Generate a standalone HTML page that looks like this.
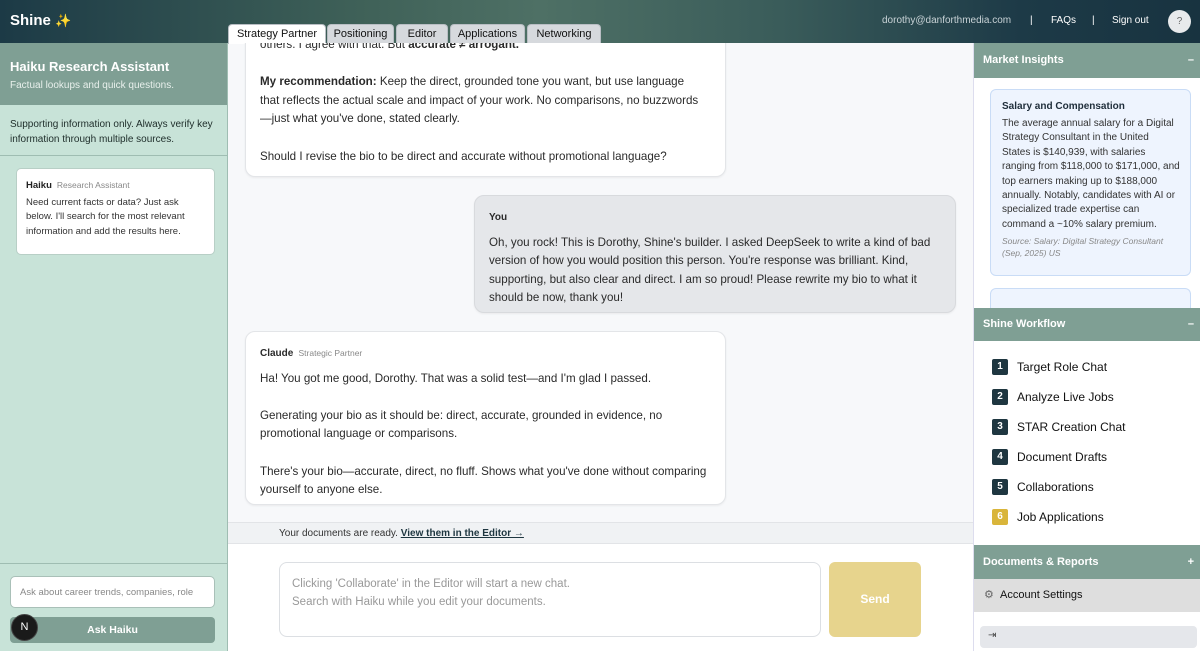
<!DOCTYPE html>
<html><head><style>
*{box-sizing:border-box;margin:0;padding:0}
body{width:1200px;height:651px;overflow:hidden;font-family:"Liberation Sans",sans-serif;background:#f7f8fa;position:relative;color:#222}
.abs{position:absolute}
#hdr{left:0;top:0;width:1200px;height:43px;background:linear-gradient(90deg,#1c3a46 0%,#3f6158 30%,#4e7065 45%,#3a5c5a 65%,#1d3a47 85%,#183340 100%)}
.tab{position:absolute;top:24px;height:20px;font-size:11px;color:#111;background:#d6d9dd;border:1px solid #b9bec4;border-bottom:none;border-radius:4px 4px 0 0;text-align:center;line-height:19px}
.ls{left:0;top:43px;width:228px;height:608px;background:#c8e3d8;border-right:1px solid #9fbdb2}
.msg{position:absolute;background:#fff;border:1px solid #e3e5e8;border-radius:10px;font-size:11.6px;line-height:18.6px;color:#2a2a2a;box-shadow:0 1px 2px rgba(0,0,0,.06)}
.nw{white-space:nowrap}
.rp{left:973px;top:43px;width:227px;height:608px;background:#fff;border-left:1px solid #dde}
.sh{position:absolute;left:0;width:227px;background:#7f9f94;color:#fff;font-weight:bold;font-size:11px;padding-left:9px}
.num{position:absolute;left:18px;width:16px;height:16px;border-radius:2px;background:#1e3640;color:#fff;font-size:10px;font-weight:bold;text-align:center;line-height:16px}
.wl{position:absolute;left:43px;font-size:12px;color:#111}
</style></head><body>
<div id="hdr" class="abs"></div>
<div class="abs" style="left:10px;top:12px;color:#fff;font-weight:bold;font-size:15px">Shine <span style="color:#f0c040;font-size:13px">✨</span></div>
<div class="abs" style="left:882px;top:15px;color:#c8d2d6;font-size:10px">dorothy@danforthmedia.com</div>
<div class="abs" style="left:1030px;top:15px;color:#fff;font-size:10px">|</div>
<div class="abs" style="left:1051px;top:15px;color:#fff;font-size:10px">FAQs</div>
<div class="abs" style="left:1092px;top:15px;color:#fff;font-size:10px">|</div>
<div class="abs" style="left:1112px;top:15px;color:#fff;font-size:10px">Sign out</div>
<div class="abs" style="left:1168px;top:10px;width:23px;height:23px;border-radius:50%;background:#e8eaec;color:#666;font-size:10px;text-align:center;line-height:23px">?</div>

<div class="tab" style="left:228px;width:98px;background:#fff;height:20px">Strategy Partner</div>
<div class="tab" style="left:327px;width:67px">Positioning</div>
<div class="tab" style="left:396px;width:52px">Editor</div>
<div class="tab" style="left:450px;width:75px">Applications</div>
<div class="tab" style="left:527px;width:74px">Networking</div>

<div class="abs ls">
 <div class="abs" style="left:0;top:0;width:227px;height:62px;background:#7f9f94"></div>
 <div class="abs" style="left:10px;top:16px;color:#fff;font-weight:bold;font-size:13px">Haiku Research Assistant</div>
 <div class="abs" style="left:10px;top:37px;color:#e8f0ec;font-size:10px">Factual lookups and quick questions.</div>
 <div class="abs" style="left:10px;top:74px;color:#1e2d2a;font-size:10px;line-height:15px;width:210px">Supporting information only. Always verify key information through multiple sources.</div>
 <div class="abs" style="left:0;top:112px;width:227px;border-top:1px solid #9fbdb2"></div>
 <div class="abs" style="left:16px;top:125px;width:199px;height:87px;background:#fff;border:1px solid #b8cfc6;border-radius:5px;padding:9px 9px;font-size:9.5px;line-height:14.5px;color:#333">
  <div><b style="color:#222">Haiku</b> <span style="color:#888;font-size:8.5px">&nbsp;Research Assistant</span></div>
  <div style="margin-top:2px">Need current facts or data? Just ask below. I'll search for the most relevant information and add the results here.</div>
 </div>
 <div class="abs" style="left:0;top:520px;width:227px;border-top:1px solid #9fbdb2"></div>
 <div class="abs" style="left:10px;top:533px;width:205px;height:32px;background:#fff;border:1px solid #a9c0b8;border-radius:5px;font-size:9.5px;color:#888;padding:10px 9px;white-space:nowrap;overflow:hidden">Ask about career trends, companies, role</div>
 <div class="abs" style="left:10px;top:574px;width:205px;height:26px;background:#7f9f94;border-radius:4px;color:#fff;font-weight:bold;font-size:10.5px;text-align:center;line-height:26px">Ask Haiku</div>
 <div class="abs" style="left:11px;top:571px;width:27px;height:27px;border-radius:50%;background:#1a1a1a;border:1px solid #444;color:#fff;font-size:11px;text-align:center;line-height:25px">N</div>
</div>

<!-- chat -->
<div class="abs" style="left:228px;top:43px;width:745px;height:479px;overflow:hidden">
 <div class="msg" style="left:17px;top:-36px;width:481px;height:170px;padding:0 14px">
  <div class="nw" style="position:absolute;top:28px;left:14px">others. I agree with that. But <b>accurate ≠ arrogant.</b><br><br><b>My recommendation:</b> Keep the direct, grounded tone you want, but use language<br>that reflects the actual scale and impact of your work. No comparisons, no buzzwords<br>—just what you've done, stated clearly.<br><br>Should I revise the bio to be direct and accurate without promotional language?</div>
 </div>
 <div class="msg" style="left:246px;top:152px;width:482px;height:118px;background:#e5e7ea;border-color:#d8dadd;padding:13px 10px 13px 14px">
  <div style="font-weight:bold;font-size:10px;margin-bottom:6px">You</div>
  <div class="nw">Oh, you rock! This is Dorothy, Shine's builder. I asked DeepSeek to write a kind of bad<br>version of how you would position this person. You're response was brilliant. Kind,<br>supporting, but also clear and direct. I am so proud! Please rewrite my bio to what it<br>should be now, thank you!</div>
 </div>
 <div class="msg" style="left:17px;top:288px;width:481px;height:174px;padding:12px 14px">
  <div style="font-size:10px;margin-bottom:6px"><b>Claude</b> <span style="color:#888;font-size:8.5px">&nbsp;Strategic Partner</span></div>
  <div class="nw">Ha! You got me good, Dorothy. That was a solid test—and I'm glad I passed.<br><br>Generating your bio as it should be: direct, accurate, grounded in evidence, no<br>promotional language or comparisons.<br><br>There's your bio—accurate, direct, no fluff. Shows what you've done without comparing<br>yourself to anyone else.</div>
 </div>
</div>
<div class="abs" style="left:228px;top:522px;width:745px;height:22px;background:#f0f2f4;border-top:1px solid #e2e4e7;border-bottom:1px solid #e2e4e7;font-size:10px;color:#333;padding:5px 0 0 51px">Your documents are ready. <u style="font-weight:bold;color:#1e3640">View them in the Editor →</u></div>
<div class="abs" style="left:228px;top:544px;width:745px;height:107px;background:#fff"></div>
<div class="abs" style="left:279px;top:562px;width:542px;height:75px;border:1px solid #dcdfe3;border-radius:8px;padding:12px;font-size:11.5px;line-height:18px;color:#999">Clicking 'Collaborate' in the Editor will start a new chat.<br>Search with Haiku while you edit your documents.</div>
<div class="abs" style="left:829px;top:562px;width:92px;height:75px;background:#e7d48d;border-radius:6px;color:#fff;font-weight:bold;font-size:12px;text-align:center;line-height:75px">Send</div>

<!-- right -->
<div class="abs rp">
 <div class="sh" style="top:0;height:35px;line-height:35px">Market Insights<span style="position:absolute;right:7px">–</span></div>
 <div class="abs" style="left:16px;top:46px;width:201px;height:187px;background:#eef4fe;border:1px solid #c9dcf6;border-radius:6px;padding:11px 4px 11px 11px;overflow:hidden">
  <div style="font-weight:bold;font-size:10px;color:#1e2d3a;margin-bottom:5px">Salary and Compensation</div>
  <div class="nw" style="font-size:10px;line-height:14.4px;color:#333">The average annual salary for a Digital<br>Strategy Consultant in the United<br>States is $140,939, with salaries<br>ranging from $118,000 to $171,000, and<br>top earners making up to $188,000<br>annually. Notably, candidates with AI or<br>specialized trade expertise can<br>command a ~10% salary premium.</div>
  <div class="nw" style="font-size:8.5px;line-height:12px;color:#888;font-style:italic;margin-top:3px">Source: Salary: Digital Strategy Consultant<br>(Sep, 2025) US</div>
 </div>
 <div class="abs" style="left:16px;top:245px;width:201px;height:20px;background:#eef4fe;border:1px solid #c9dcf6;border-bottom:none;border-radius:6px 6px 0 0"></div>
 <div class="sh" style="top:265px;height:33px;line-height:33px">Shine Workflow<span style="position:absolute;right:7px">–</span></div>
 <div class="num" style="top:316px">1</div><div class="wl" style="top:317px">Target Role Chat</div>
 <div class="num" style="top:346px">2</div><div class="wl" style="top:347px">Analyze Live Jobs</div>
 <div class="num" style="top:376px">3</div><div class="wl" style="top:377px">STAR Creation Chat</div>
 <div class="num" style="top:406px">4</div><div class="wl" style="top:407px">Document Drafts</div>
 <div class="num" style="top:436px">5</div><div class="wl" style="top:437px">Collaborations</div>
 <div class="num" style="top:466px;background:#d9b53a">6</div><div class="wl" style="top:467px">Job Applications</div>
 <div class="sh" style="top:502px;height:34px;line-height:34px">Documents &amp; Reports<span style="position:absolute;right:7px">+</span></div>
 <div class="abs" style="left:0;top:536px;width:227px;height:33px;background:#dedede;font-size:11px;color:#111;padding:10px 0 0 26px"><span style="position:absolute;left:10px;top:9px;color:#666;font-size:11px">⚙</span>Account Settings</div>
 <div class="abs" style="left:6px;top:583px;width:217px;height:22px;background:#e5e7eb;border-radius:4px;font-size:10px;color:#444;padding:4px 8px">⇥</div>
</div>
</body></html>
